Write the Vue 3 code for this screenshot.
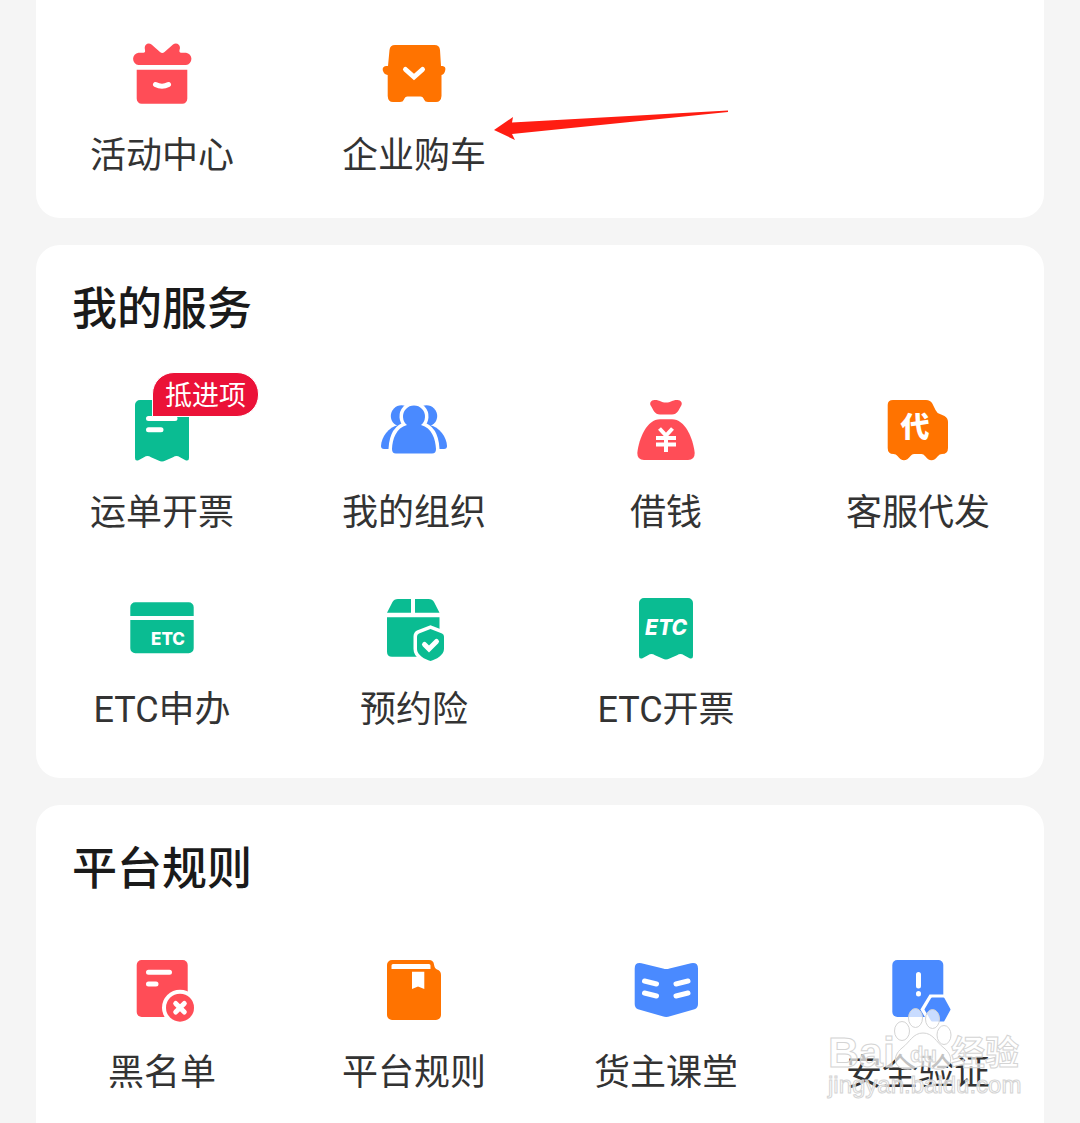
<template>
  <main class="page">
    <section v-for="group in groups" :key="group.id" class="card" :class="`card-${group.id}`">
      <h2 v-if="group.title">{{ group.title }}</h2>
      <nav class="grid">
        <a v-for="item in group.items" :key="item.label" class="item" href="#">
          <span class="icon">
            <svg viewBox="0 0 72 72" :class="item.color" aria-hidden="true">
              <template v-if="item.icon === 'gift'">
                <path d="M12.500 14.700H17.500Q19.500 14.700 19 12L18.700 10C18.700 6 22.500 4.500 25.500 6.500L34 14Q36.300 16 38.500 14L47 6.500C50 4.500 54 6 54 10L53.500 12Q53 14.700 55 14.700H60A6.200 6.200 0 0 1 60 27H12.500A6.200 6.200 0 0 1 12.500 14.700Z" />
                <path d="M10.700 31.700H61.300V60.500A5 5 0 0 1 56.300 65.700H15.700A5 5 0 0 1 10.700 60.500Z" />
                <path class="line" d="M29.500 46.500Q36 50 42.500 46.500" />
              </template>
              <template v-else-if="item.icon === 'truck'">
                <path d="M17 7H56.500Q61.500 7 62 12L63 28H64.500Q68 28.500 67.300 32Q66.500 36.500 63.500 37V58Q63 64 58 64H50Q47 64 46 61.500Q45 58.500 42.500 58.500H29.500Q27 58.500 26 61.500Q25 64 22 64H15Q10 64 9.700 58V37Q6 36.500 4.800 32.500Q4 28.500 8 28H10L11.500 12Q12 7 17 7Z" />
                <path class="line" d="M27.500 31.500L36 39L44.500 31.500" />
              </template>
              <template v-else-if="item.icon === 'invoice'">
                <path d="M14 5H58A5 5 0 0 1 63 10V63Q63 66.500 59.500 65.300L54 62.200Q50.500 60 47 62.200L39.500 65.500Q36 67.500 32.500 65.500L25 62.200Q21.500 60 18 62.200L12.500 65.300Q9 66.500 9 63V10A5 5 0 0 1 14 5Z" />
                <path class="line" d="M22.500 23.500H49M22.500 34.700H35" />
              </template>
              <template v-else-if="item.icon === 'people'">
                <circle cx="23.500" cy="21" r="10.700" />
                <circle cx="48.500" cy="21" r="10.700" />
                <path d="M21 30C10 32 3.500 42 3 51Q3 54 6 54H66Q69 54 69 51C68.500 42 62 32 51 30Z" />
                <path class="halo" d="M29 30A11 11 0 1 1 43 30C54 33 57.500 44 58 54Q58 58.500 54 58.500H18Q14 58.500 14 54C14.500 44 18 33 29 30Z" />
                <path d="M29 30A11 11 0 1 1 43 30C54 33 57.500 44 58 54Q58 58.500 54 58.500H18Q14 58.500 14 54C14.500 44 18 33 29 30Z" />
              </template>
              <template v-else-if="item.icon === 'money'">
                <path d="M24.500 5C29 4.500 31 7.500 36 7.500S43 4.500 47.500 5C51 5.200 53 8 51 11C48.500 15 47.500 19.500 42 19.500H30C24.500 19.500 23.500 15 21 11C19 8 21 5.200 24.500 5Z" />
                <path d="M30 24.300H42C55 24.300 63 43 64.700 58Q64.700 65 58 65H14Q7.300 65 7.300 58C9 43 17 24.300 30 24.300Z" />
                <path class="yen" d="M29.500 33.500L36 40.500L42.500 33.500M26 43H46M26 49.500H46M36 40V57" />
              </template>
              <template v-else-if="item.icon === 'agent'">
                <path d="M11 5H44Q48.500 5 50.300 8.500L53.500 15Q55 18.500 58.500 19.300L62.500 21Q66 23 66 27V53Q66 59 60 59Q57.500 59 56 61C52 66.700 47 66.700 43 61Q41.500 59 39.500 59H32Q30 59 28.500 61C24.500 66.700 19.500 66.700 15.500 61Q14 59 11.500 59Q5.700 59 5.700 53V10Q5.700 5 11 5Z" />
                <text x="33" y="43" class="agent-text">代</text>
              </template>
              <template v-else-if="item.icon === 'etc-card'">
                <path d="M9.300 10.300H62.700A5 5 0 0 1 67.700 15.300V24H4.300V15.300A5 5 0 0 1 9.300 10.300ZM4.300 28H67.700V56.300A5 5 0 0 1 62.700 61.300H9.300A5 5 0 0 1 4.300 56.300Z" />
                <text x="42" y="53" class="etc-small">ETC</text>
              </template>
              <template v-else-if="item.icon === 'insurance'">
                <path d="M20 7H33V20.700H9L14.500 10Q16 7 20 7ZM37 7H50.500Q54.500 7 56 10L61.500 20.700H37ZM9 25.300H61.500V64.700H14Q9 64.700 9 59.700Z" />
                <path class="halo" d="M52.500 37L64 41.500Q66 42.500 66 44.500V57C66 63 58 67.500 52.500 69C47 67.500 39 63 39 57V44.500Q39 42.500 41 41.500Z" />
                <path d="M52.500 37L64 41.500Q66 42.500 66 44.500V57C66 63 58 67.500 52.500 69C47 67.500 39 63 39 57V44.500Q39 42.500 41 41.500Z" />
                <path class="line" d="M46.500 52.500L51 57L58.500 49.500" />
              </template>
              <template v-else-if="item.icon === 'etc-invoice'">
                <path d="M14 6H58A5 5 0 0 1 63 11V64Q63 67.500 59.500 66.300L54 63.200Q50.500 61 47 63.200L39.500 66.500Q36 68.500 32.500 66.500L25 63.200Q21.500 61 18 63.200L12.500 66.300Q9 67.500 9 64V11A5 5 0 0 1 14 6Z" />
                <text x="36" y="43" class="etc-large">ETC</text>
              </template>
              <template v-else-if="item.icon === 'blacklist'">
                <rect x="10.700" y="5" width="51" height="57" rx="5" />
                <path class="line" d="M22.500 17.300H43.500M22.500 29H30" />
                <circle class="hole" cx="54" cy="52.700" r="18" />
                <circle cx="54" cy="52.700" r="14" />
                <path class="line" d="M49.700 48.400L58.300 57M58.300 48.400L49.700 57" />
              </template>
              <template v-else-if="item.icon === 'rules'">
                <path d="M14 5H51Q55.500 5 56 9.500Q56.500 13.500 59 14.500Q63 15.500 63 20V60A5 5 0 0 1 58 65H14A5 5 0 0 1 9 60V10A5 5 0 0 1 14 5Z" />
                <path class="hole" d="M15 9H51Q52.500 9 52.500 10.500V14H13.500V10.500Q13.500 9 15 9ZM34 16.700H46.300V34L40 31.500L34 34Z" />
              </template>
              <template v-else-if="item.icon === 'lesson'">
                <path d="M11.500 8.200L33 13.500Q36.300 14.500 39.500 13.500L61 8.200Q68 7 68 13.500V49Q68 53 64.500 54.300L40 61.300Q36.300 62.500 32.500 61.300L8 54.300Q4.700 53 4.700 49V13.500Q4.700 7 11.500 8.200Z" />
                <path class="line" d="M14.500 26L26.500 29M14.500 38L26.500 41M58 26L46 29M58 38L46 41" />
              </template>
              <template v-else>
                <rect x="10.300" y="5" width="51" height="57" rx="5" />
                <path class="line" d="M36.500 19.500V31M36.500 38.500V39" />
                <path class="halo" d="M49.500 43H62L68.500 54.500L62 66H49.500L42.500 54.500Z" />
                <path class="round" d="M50 43.500H61.500L67.500 54.500L61.500 65.500H50L43.500 54.500Z" />
              </template>
            </svg>
            <span v-if="item.badge" class="badge">{{ item.badge }}</span>
          </span>
          <span class="label">{{ item.label }}</span>
        </a>
      </nav>
      <svg v-if="group.id === 'activity'" class="arrow" viewBox="0 0 236 32" aria-hidden="true">
        <path d="M0 22L19 9L18 14.500L234 2.500V4L18 26L21 32Z" />
      </svg>
    </section>

    <svg class="watermark" viewBox="0 0 204 100" aria-hidden="true">
      <text x="4" y="63" class="brand">Bai</text>
      <text x="127" y="61" class="brand-cn">经验</text>
      <g>
        <ellipse cx="78" cy="27" rx="7.500" ry="9.500" />
        <ellipse cx="91.500" cy="14" rx="7" ry="9.500" />
        <ellipse cx="108.500" cy="15" rx="7" ry="9.500" />
        <ellipse cx="120" cy="31" rx="7" ry="9.500" />
        <path d="M99 29C109 29 112 38 120 44C131 53 127 64 117 65C108 66 106 62 99 62S90 66 81 65C71 64 67 53 78 44C86 38 89 29 99 29Z" />
      </g>
      <text x="86" y="58" class="paw-text">du</text>
      <text x="4" y="89" class="site">jingyan.baidu.com</text>
    </svg>
  </main>
</template>

<script setup>
const groups = [
  {
    id: 'activity',
    items: [
      { label: '活动中心', icon: 'gift', color: 'red' },
      { label: '企业购车', icon: 'truck', color: 'orange' }
    ]
  },
  {
    id: 'service',
    title: '我的服务',
    items: [
      { label: '运单开票', icon: 'invoice', color: 'green', badge: '抵进项' },
      { label: '我的组织', icon: 'people', color: 'blue' },
      { label: '借钱', icon: 'money', color: 'red' },
      { label: '客服代发', icon: 'agent', color: 'orange' },
      { label: 'ETC申办', icon: 'etc-card', color: 'green' },
      { label: '预约险', icon: 'insurance', color: 'green' },
      { label: 'ETC开票', icon: 'etc-invoice', color: 'green' }
    ]
  },
  {
    id: 'rules',
    title: '平台规则',
    items: [
      { label: '黑名单', icon: 'blacklist', color: 'red' },
      { label: '平台规则', icon: 'rules', color: 'orange' },
      { label: '货主课堂', icon: 'lesson', color: 'blue' },
      { label: '安全验证', icon: 'safety', color: 'blue' }
    ]
  }
]
</script>

<style>
body {
  background: #f5f5f5;
}
</style>

<style scoped>
.page {
  position: relative;
  display: flex;
  flex-direction: column;
  gap: 27px;
  min-height: 100vh;
  box-sizing: border-box;
  padding: 0 36px;
  background: #f5f5f5;
  font-family: Roboto, "Noto Sans CJK SC", sans-serif;
}
.card {
  position: relative;
  padding: 35px 0 46px;
  border-radius: 24px;
  background: #fff;
}
.card-activity {
  padding: 38px 0 40px;
  border-radius: 0 0 24px 24px;
}
/* the last card runs on below the fold */
.card-rules {
  flex: 1;
  padding-bottom: 0;
  border-radius: 24px 24px 0 0;
}
h2 {
  margin: 0 0 55px;
  padding: 0 36px;
  font-size: 45px;
  line-height: 60px;
  font-weight: 500;
  color: #1a1a1a;
}
.grid {
  display: grid;
  grid-template-columns: repeat(4, 1fr);
  row-gap: 57px;
}
.item {
  display: flex;
  flex-direction: column;
  align-items: center;
  gap: 24px;
  color: #333;
  text-decoration: none;
}
.icon {
  position: relative;
  width: 72px;
  height: 72px;
}
.icon svg {
  display: block;
  width: 100%;
  height: 100%;
}
.label {
  font-size: 36px;
  line-height: 44px;
  font-weight: 400;
  white-space: nowrap;
}
.red {
  fill: #ff4d57;
}
.orange {
  fill: #ff7300;
}
.green {
  fill: #0abc92;
}
.blue {
  fill: #4a8aff;
}
.line {
  fill: none;
  stroke: #fff;
  stroke-width: 5;
  stroke-linecap: round;
}
.yen {
  fill: none;
  stroke: #fff;
  stroke-width: 4;
}
.halo {
  fill: #fff;
  stroke: #fff;
  stroke-width: 7;
}
.round {
  stroke: #4a8aff;
  stroke-width: 2;
  stroke-linejoin: round;
}
.hole {
  fill: #fff;
}
.icon text {
  fill: #fff;
  text-anchor: middle;
}
.agent-text {
  font: 900 29px "Noto Sans CJK SC", sans-serif;
}
.etc-small {
  font: 800 17px Inter, sans-serif;
}
.etc-large {
  font: italic 800 21px Inter, sans-serif;
}
.badge {
  position: absolute;
  left: 26px;
  top: -23px;
  padding: 4px 12px 0;
  border: 1px solid #fff;
  border-radius: 22px 22px 22px 0;
  background: #eb1238;
  color: #fff;
  font-size: 27px;
  line-height: 39px;
  white-space: nowrap;
}
.arrow {
  position: absolute;
  left: 458px;
  top: 108px;
  width: 236px;
  height: 32px;
  fill: #ff1d12;
}
.watermark {
  position: absolute;
  right: 52px;
  bottom: 19px;
  width: 204px;
  height: 100px;
  fill: rgba(255, 255, 255, 0.7);
  stroke: #d4d4d4;
  stroke-width: 1;
  pointer-events: none;
}
.brand {
  font: 700 43px "Liberation Sans", sans-serif;
}
.brand-cn {
  font: 700 34px "Noto Sans CJK SC", sans-serif;
}
.paw-text {
  font: 700 22px "Liberation Sans", sans-serif;
}
.site {
  font: 400 24px "Liberation Sans", sans-serif;
}
</style>
